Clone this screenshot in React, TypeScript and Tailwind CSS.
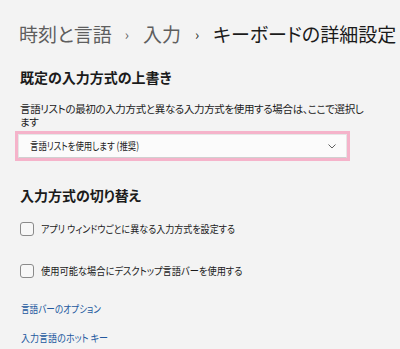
import React from "react";

const font = "font-['Noto_Sans_CJK_JP','Noto_Sans',sans-serif] [font-feature-settings:'palt']";

function Checkbox({ label, squeeze }: { label: string; squeeze: string }) {
  return (
    <div className="flex items-center gap-[7px]">
      <div className="w-[14px] h-[14px] rounded-[3px] border border-[#8a8a8a] bg-[#f7f7f7] shrink-0" />
      <span className={`inline-block origin-left whitespace-nowrap text-[10.5px] leading-[14px] text-[#1b1b1b] ${squeeze}`}>{label}</span>
    </div>
  );
}

export default function App() {
  return (
    <div className={`${font} w-[400px] h-[349px] bg-[#f3f3f3] overflow-hidden pl-[19px] pt-[20px]`}>
      <div className="flex items-center text-[19px] leading-[28px] whitespace-nowrap">
        <span className="text-[#5e5e5e]">時刻と言語</span>
        <span className="text-[#5e5e5e] text-[14px] ml-[13px] mr-[14px]">›</span>
        <span className="text-[#5e5e5e]">入力</span>
        <span className="text-[#1b1b1b] text-[14px] mx-[14px]">›</span>
        <span className="text-[#1b1b1b]">キーボードの詳細設定</span>
      </div>

      <div className="mt-[19px] text-[14px] leading-[20px] font-semibold text-[#1b1b1b] pl-[1px]">
        既定の入力方式の上書き
      </div>

      <div className="mt-[15px] w-[346px] text-[10.5px] tracking-[-0.35px] leading-[13px] text-[#1b1b1b] pl-[1px]">
        言語リストの最初の入力方式と異なる入力方式を使用する場合は、ここで選択します
      </div>

      <div className="mt-[3px] -ml-[4px] w-[335px] h-[30px] border-[3px] border-[#f5b3ca]">
        <div className="h-full flex items-center justify-between bg-[#fbfbfb] border border-[#e6e6e6] border-b-[#d0d0d0] pl-[11px] pr-[10px]">
          <span className="inline-block origin-left whitespace-nowrap scale-x-[0.8] text-[10.5px] text-[#1b1b1b]">言語リストを使用します (推奨)</span>
          <svg width="8" height="5" viewBox="0 0 8 5" fill="none">
            <path d="M0.5 0.5 L4 4 L7.5 0.5" stroke="#606060" strokeWidth="1" />
          </svg>
        </div>
      </div>

      <div className="mt-[24px] text-[14px] leading-[20px] font-semibold text-[#1b1b1b] pl-[1px]">
        入力方式の切り替え
      </div>

      <div className="mt-[17px] pl-[1px] flex flex-col gap-[28px]">
        <Checkbox label="アプリ ウィンドウごとに異なる入力方式を設定する" squeeze="scale-x-[0.86]" />
        <Checkbox label="使用可能な場合にデスクトップ言語バーを使用する" squeeze="scale-x-[0.88]" />
      </div>

      <div className="mt-[24px] pl-[2px] flex flex-col items-start gap-[15px] text-[10.5px] leading-[14px] text-[#22589e]">
        <span className="inline-block origin-left whitespace-nowrap scale-x-[0.82]">言語バーのオプション</span>
        <span className="inline-block origin-left whitespace-nowrap scale-x-[0.86]">入力言語のホット キー</span>
      </div>
    </div>
  );
}
